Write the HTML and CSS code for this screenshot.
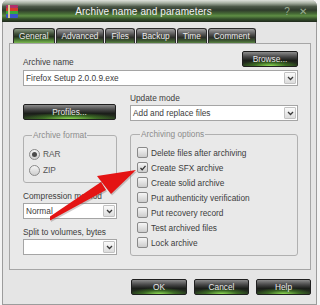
FILE: index.html
```html
<!DOCTYPE html>
<html lang="en">

<head>
  <meta charset="UTF-8">
  <title>Archive name and parameters</title>
  <link rel="stylesheet" href="styles.css">
</head>

<body>
  <div class="window">
    <div class="titlebar">
      <svg class="app-icon" width="12" height="13" viewBox="0 0 12 13">
        <rect x="0" y="0" width="12" height="3" rx="1" fill="#b0306a" />
        <rect x="0" y="3" width="12" height="3" fill="#d83a2a" />
        <rect x="0" y="6" width="12" height="3" fill="#3aa83a" />
        <rect x="0" y="9" width="12" height="4" rx="1" fill="#3a54c8" />
        <rect x="2" y="0" width="2" height="13" fill="#d8c890" />
      </svg>
      <div class="title">Archive name and parameters</div>
      <span class="tb-btn">?</span>
      <span class="tb-btn">&#x2715;</span>
    </div>

    <div class="tabs">
      <span class="tab active">General</span>
      <span class="tab">Advanced</span>
      <span class="tab">Files</span>
      <span class="tab">Backup</span>
      <span class="tab">Time</span>
      <span class="tab">Comment</span>
    </div>

    <div class="panel">
      <div class="name-row">
        <span class="label">Archive name</span>
        <button class="btn browse">Browse...</button>
      </div>
      <div class="combo name-combo">
        <span class="value">Firefox Setup 2.0.0.9.exe</span>
        <span class="drop"><svg width="7" height="5" viewBox="0 0 7 5"><path d="M1 1 L3.5 3.5 L6 1" /></svg></span>
      </div>

      <div class="cols">
        <div class="col left">
          <button class="btn profiles">Profiles...</button>
          <fieldset class="group format">
            <legend>Archive format</legend>
            <div class="opt"><span class="radio checked"></span>RAR</div>
            <div class="opt"><span class="radio"></span>ZIP</div>
          </fieldset>
          <div class="label field-label">Compression method</div>
          <div class="combo">
            <span class="value">Normal</span>
            <span class="drop"><svg width="7" height="5" viewBox="0 0 7 5"><path d="M1 1 L3.5 3.5 L6 1" /></svg></span>
          </div>
          <div class="label field-label">Split to volumes, bytes</div>
          <div class="combo">
            <span class="value"></span>
            <span class="drop"><svg width="7" height="5" viewBox="0 0 7 5"><path d="M1 1 L3.5 3.5 L6 1" /></svg></span>
          </div>
        </div>

        <div class="col right">
          <div class="label mode-label">Update mode</div>
          <div class="combo">
            <span class="value">Add and replace files</span>
            <span class="drop"><svg width="7" height="5" viewBox="0 0 7 5"><path d="M1 1 L3.5 3.5 L6 1" /></svg></span>
          </div>
          <fieldset class="group options">
            <legend>Archiving options</legend>
            <div class="opt"><span class="check"></span>Delete files after archiving</div>
            <div class="opt"><span class="check checked"><svg width="8" height="8" viewBox="0 0 8 8"><path d="M1.5 4 L3.2 5.8 L6.5 1.8" /></svg></span>Create SFX archive</div>
            <div class="opt"><span class="check"></span>Create solid archive</div>
            <div class="opt"><span class="check"></span>Put authenticity verification</div>
            <div class="opt"><span class="check"></span>Put recovery record</div>
            <div class="opt"><span class="check"></span>Test archived files</div>
            <div class="opt"><span class="check"></span>Lock archive</div>
          </fieldset>
        </div>
      </div>
    </div>

    <div class="actions">
      <button class="btn ok">OK</button>
      <button class="btn">Cancel</button>
      <button class="btn">Help</button>
    </div>
  </div>

  <!-- red pointer drawn over the dialog -->
  <svg class="pointer" width="320" height="305" viewBox="0 0 320 305">
    <g transform="translate(1 1.5)" fill="#7a6a6a" opacity="0.35">
      <polygon points="50,216.5 101,182 106,190 50,220.5" />
      <polygon points="97,176 136,170 111,194" />
    </g>
    <polygon points="50,216.5 101,182 106,190 50,220.5" fill="#e41414" />
    <polygon points="97,176 136,170 111,194" fill="#e41414" />
  </svg>
</body>

</html>
```

FILE: styles.css
```css
* {
  box-sizing: border-box;
}

body {
  margin: 0;
  background: #f4f4f4;
  font-family: "Liberation Sans", Arial, sans-serif;
  font-size: 8.3px;
  color: #3c3c3c;
  position: relative;
}

.window {
  margin-left: 2px;
  width: 315px;
  height: 305px;
  background: #e5e5e5;
  border: 1px solid #9c9c9c;
  border-top: none;
  border-radius: 6px 6px 0 0;
}

.titlebar {
  display: flex;
  align-items: center;
  height: 22px;
  margin: 0 -1px;
  padding: 0 6px 0 4px;
  border-radius: 6px 6px 0 0;
  background: linear-gradient(#dfe2dc 0, #a7b0a2 14%, #4b5747 30%, #2f3b2c 46%, #466a35 62%, #5f8e45 72%, #35502b 86%, #1f291d 100%);
  color: #f2f2f2;
}

.app-icon {
  flex: none;
  margin-top: 1px;
}

.title {
  flex: 1;
  text-align: center;
  font-size: 10px;
  letter-spacing: 0.1px;
  padding-right: 10px;
}

.tb-btn {
  width: 16px;
  text-align: center;
  color: #9aac90;
  font-size: 10px;
}

.tabs {
  display: flex;
  gap: 1px;
  height: 15px;
  margin-top: 6px;
  padding-left: 10px;
}

.tab {
  height: 15px;
  padding: 0 5px;
  line-height: 14px;
  color: #ececec;
  border: 1px solid #2b2b2b;
  border-bottom: none;
  border-radius: 3px 3px 0 0;
  background: linear-gradient(#a0a0a0, #5a5a5a 35%, #2c2f2a 60%, #3f5a32 85%, #5a8444);
}

.tab.active {
  background: linear-gradient(#8a9a84, #3f4f38 35%, #24321f 55%, #4f7f36 80%, #7ab850);
}

.panel {
  width: 302px;
  height: 227px;
  margin-left: 6px;
  padding: 7px 12px 0 13px;
  background: #e9e9e9;
  border: 1px solid #a6a6a6;
}

.label {
  line-height: 10px;
}

.name-row {
  display: flex;
  justify-content: space-between;
  align-items: flex-end;
  height: 16px;
}

.btn {
  height: 16px;
  padding: 0;
  font-family: inherit;
  font-size: 8.3px;
  color: #e8e8e8;
  border: 1px solid #1f1f1f;
  border-radius: 2px;
  background:
    radial-gradient(ellipse 55% 45% at 50% 100%, rgba(150, 230, 90, 0.95), rgba(80, 160, 40, 0.5) 55%, rgba(40, 70, 30, 0) 100%),
    linear-gradient(#8c8c8c, #454545 35%, #1b1e1a 60%, #2a3a22);
}

.browse {
  width: 56px;
}

.combo {
  display: flex;
  align-items: center;
  height: 16px;
  background: #fff;
  border: 1px solid #a5a5a5;
}

.name-combo {
  margin-top: 3px;
}

.combo .value {
  flex: 1;
  padding-left: 2px;
  white-space: nowrap;
  overflow: hidden;
}

.drop {
  display: flex;
  align-items: center;
  justify-content: center;
  width: 12px;
  height: 12px;
  margin-right: 1px;
  background: linear-gradient(#fafafa, #dcdcdc);
  border: 1px solid #c2c2c2;
  border-radius: 1px;
}

.drop path {
  fill: none;
  stroke: #3a3a3a;
  stroke-width: 1.3;
}

.cols {
  display: flex;
  gap: 13px;
  margin-top: 7px;
}

.col.left {
  width: 94px;
}

.col.right {
  width: 168px;
}

.profiles {
  width: 93px;
  margin-top: 11px;
}

.group {
  margin: 10px 0 0;
  padding: 6px 0 4px 5px;
  border: 1px solid #b0b0b0;
  border-radius: 3px;
}

.group legend {
  margin-left: 3px;
  padding: 0 1px;
  line-height: 10px;
  color: #8c8c8c;
}

.options {
  margin-top: 8px;
  padding-left: 6px;
  padding-bottom: 5px;
}

.opt {
  display: flex;
  align-items: center;
  gap: 3px;
  height: 15px;
}

.format .opt {
  height: 16px;
  color: #555;
}

.radio {
  width: 11px;
  height: 11px;
  border: 1px solid #8a8a8a;
  border-radius: 50%;
  background: linear-gradient(#f4f4f4, #cfcfcf);
  display: flex;
  align-items: center;
  justify-content: center;
}

.radio.checked::after {
  content: "";
  width: 5px;
  height: 5px;
  border-radius: 50%;
  background: #4a4a4a;
}

.check {
  display: flex;
  align-items: center;
  justify-content: center;
  width: 11px;
  height: 11px;
  border: 1px solid #8a8a8a;
  border-radius: 2px;
  background: linear-gradient(#f6f6f6, #cccccc);
}

.check path {
  fill: none;
  stroke: #333;
  stroke-width: 1.3;
}

.field-label {
  margin-top: 8px;
  margin-bottom: 2px;
}

.mode-label {
  margin-bottom: 2px;
}

.actions {
  display: flex;
  justify-content: flex-end;
  gap: 7px;
  margin-top: 9px;
  padding-right: 5px;
}

.actions .btn {
  width: 55px;
}

.actions .ok {
  width: 56px;
}

.pointer {
  position: absolute;
  left: 0;
  top: 0;
  pointer-events: none;
}
```
